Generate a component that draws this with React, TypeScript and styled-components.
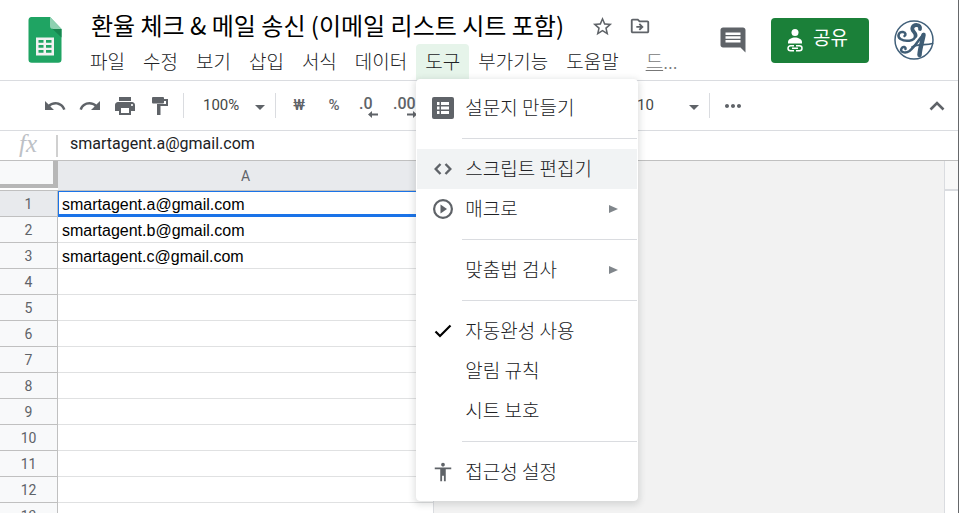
import React from 'react';
import styled, { createGlobalStyle, css } from 'styled-components';
import {
  MdUndo,
  MdRedo,
  MdPrint,
  MdComment,
  MdStarBorder,
  MdOutlineDriveFileMove,
  MdAccessibility,
  MdMoreHoriz,
} from 'react-icons/md';

const Global = createGlobalStyle`
  *, *::before, *::after { box-sizing: border-box; }
  html, body { margin: 0; height: 100%; }
  body { background: #fff; overflow: hidden; }
  button, input, select { font: inherit; color: inherit; margin: 0; }
`;

const korean = `'Noto Sans CJK KR', sans-serif`;
const roboto = `Roboto, 'Noto Sans CJK KR', sans-serif`;

const Page = styled.div`
  display: flex;
  flex-direction: column;
  height: 100vh;
  border-right: 1px solid #66686b;
  font-family: ${korean};
  color: #202124;
`;

const Header = styled.header`
  display: flex;
  flex: none;
  height: 81px;
  border-bottom: 1px solid #dadce0;
`;

const LogoLink = styled.a`
  flex: none;
  padding: 17px 19px 0 28px;
  svg { display: block; }
`;

const HeaderMain = styled.div`
  flex: 1;
  min-width: 0;
`;

const TitleRow = styled.div`
  display: flex;
  align-items: center;
  height: 44px;
  padding: 8px 0 0 10px;
`;

const Title = styled.h1`
  margin: 0 26px 0 0;
  padding-bottom: 2px;
  font-size: 24px;
  line-height: 36px;
  font-weight: 400;
  color: #000;
  white-space: nowrap;
`;

const IconButton = styled.button<{ $w?: number }>`
  display: flex;
  flex: none;
  align-items: center;
  justify-content: center;
  width: ${(p) => p.$w ?? 24}px;
  height: 32px;
  padding: 0;
  border: 0;
  background: none;
  color: #5f6368;
  svg { display: block; flex: none; }
`;

const TitleActions = styled.div`
  display: flex;
  gap: 14px;
`;

const MenuBar = styled.nav`
  display: flex;
  height: 36px;
`;

const MenuSlot = styled.div`
  position: relative;
`;

const MenuButton = styled.button<{ $active?: boolean }>`
  height: 36px;
  padding: 0 9px 2px;
  border: 0;
  border-radius: 4px 4px 0 0;
  background: ${(p) => (p.$active ? '#e6f4ea' : 'none')};
  font-size: 19px;
  font-weight: 300;
  line-height: 34px;
  white-space: nowrap;
`;

const DriveNote = styled.a`
  margin-left: 18px;
  font-size: 19px;
  font-weight: 300;
  line-height: 34px;
  color: #777;
  text-decoration: none;
  span { text-decoration: underline; }
`;

const HeaderSide = styled.div`
  display: flex;
  flex: none;
  align-items: center;
  height: 80px;
  padding-right: 24px;
`;

const ShareButton = styled.button`
  display: flex;
  align-items: center;
  gap: 10px;
  height: 45px;
  margin: 0 25px 0 23px;
  padding: 0 21px 0 16px;
  border: 0;
  border-radius: 4px;
  background: #1b8039;
  color: #fff;
  font-size: 19px;
  line-height: 40px;
  svg { display: block; }
  span { padding-bottom: 6px; }
`;

const Avatar = styled.button`
  padding: 0;
  border: 0;
  background: none;
  border-radius: 50%;
  svg { display: block; }
`;

const Menu = styled.div`
  position: absolute;
  top: 35px;
  left: 0;
  z-index: 10;
  width: 222px;
  padding: 8px 0;
  border: 1px solid #fff;
  border-radius: 4px;
  background: #fff;
  box-shadow: 0 2px 6px 2px rgba(60, 64, 67, 0.15);
`;

const MenuItem = styled.button<{ $hover?: boolean }>`
  display: grid;
  grid-template-columns: 48px 1fr 28px;
  align-items: center;
  width: 100%;
  height: 40px;
  padding: 0;
  border: 0;
  background: ${(p) => (p.$hover ? '#f1f3f4' : 'none')};
  font-size: 19px;
  font-weight: 300;
  line-height: 36px;
  text-align: left;
  white-space: nowrap;
`;

const ItemIcon = styled.span<{ $dark?: boolean }>`
  display: flex;
  justify-content: center;
  width: 52px;
  color: ${(p) => (p.$dark ? '#000' : '#5f6368')};
`;

const ItemLabel = styled.span`
  padding-bottom: 3px;
`;

const MenuRule = styled.hr`
  height: 1px;
  margin: 10px 0 10px 45px;
  border: 0;
  background: #dadce0;
`;

const Toolbar = styled.div`
  display: flex;
  flex: none;
  align-items: center;
  height: 50px;
  padding: 0 9px 0 43px;
  border-bottom: 1px solid #dadce0;
  font-family: ${roboto};
  font-size: 15px;
  color: #444746;
`;

const ToolGroup = styled.div<{ $gap: number }>`
  display: flex;
  align-items: center;
  gap: ${(p) => p.$gap}px;
`;

const Divider = styled.span<{ $before: number; $after: number }>`
  flex: none;
  width: 1px;
  height: 25px;
  margin: 0 ${(p) => p.$after}px 0 ${(p) => p.$before}px;
  background: #dadce0;
`;

const SelectBox = styled.label<{ $w: number }>`
  display: grid;
  align-items: center;
  width: ${(p) => p.$w}px;
  select, svg { grid-area: 1 / 1; }
  select {
    appearance: none;
    width: 100%;
    height: 32px;
    padding: 0 0 2px;
    border: 0;
    background: none;
  }
  svg { justify-self: end; pointer-events: none; margin-top: 3px; }
`;

const TextTool = styled.button<{ $w: number }>`
  width: ${(p) => p.$w}px;
  height: 32px;
  padding: 0 0 2px;
  border: 0;
  background: none;
  font-weight: 500;
  color: #5f6368;
`;

const FontSizeGroup = styled.div`
  display: flex;
  align-items: center;
  margin-left: 220px;
`;

const Spacer = styled.span`
  flex: 1;
`;

const FormulaBar = styled.div`
  display: flex;
  flex: none;
  align-items: center;
  height: 30px;
  border-bottom: 1px solid #c0c0c0;
`;

const FxLabel = styled.label`
  width: 56px;
  padding-bottom: 4px;
  font-family: 'Liberation Serif', serif;
  font-style: italic;
  font-size: 25px;
  line-height: 24px;
  text-align: center;
  color: #bdc1c6;
`;

const FormulaInput = styled.input`
  flex: 1;
  height: 22px;
  padding: 0 0 4px 12px;
  border: 0;
  border-left: 2px solid #d0d0d0;
  outline: 0;
  background: none;
  font-family: ${roboto};
  font-size: 16px;
`;

const Workspace = styled.main`
  display: flex;
  flex: 1;
  min-height: 0;
`;

const SheetArea = styled.div`
  flex: 1;
  min-width: 0;
  overflow: hidden;
  background: #f2f2f2;
`;

const Sheet = styled.table`
  width: 434px;
  table-layout: fixed;
  border-collapse: separate;
  border-spacing: 0;
  background: #fff;
  font-family: 'Liberation Sans', Arial, sans-serif;
  font-size: 16px;
`;

const Corner = styled.td`
  width: 58px;
  height: 30px;
  padding: 0 0 2px;
  border-bottom: 1px solid #c0c0c0;
`;

const CornerButton = styled.button`
  display: block;
  width: 58px;
  height: 27px;
  padding: 0;
  border: 0 solid #b7b7b7;
  border-width: 0 5px 4px 0;
  background: #f8f9fa;
`;

const headText = css`
  padding: 0;
  font-family: Roboto, sans-serif;
  font-weight: 400;
  font-size: 14px;
  color: #5f6368;
  border-bottom: 1px solid #c0c0c0;
`;

const ColumnHead = styled.th`
  ${headText}
  background: #e8eaed;
  border-right: 1px solid #c0c0c0;
`;

const RowHead = styled.th<{ $active: boolean }>`
  ${headText}
  height: 26px;
  border-right: 1px solid #c0c0c0;
  background: ${(p) => (p.$active ? '#e8eaed' : '#f8f9fa')};
`;

const Cell = styled.td<{ $active: boolean }>`
  height: 26px;
  padding: 2px 4px 0;
  line-height: 20px;
  color: #000;
  border-right: 1px solid #dadce0;
  border-bottom: 1px solid ${(p) => (p.$active ? '#1a73e8' : '#e0e1e2')};
  ${(p) =>
    p.$active &&
    css`
      box-shadow: inset 1px 1px 0 #1a73e8, inset 0 -2px 0 #1a73e8;
    `}
`;

const ScrollGutter = styled.div`
  flex: none;
  width: 14px;
  border-left: 1px solid #dadce0;
  &::before {
    content: '';
    display: block;
    height: 30px;
    background: #f8f8f8;
    border-bottom: 2px solid #dadce0;
  }
`;

const SheetsLogo = () => (
  <svg width="34" height="46" viewBox="0 0 34 46" aria-hidden="true">
    <path d="M3.500 0H22L33.500 12V42.500a3.300 3.300 0 0 1-3.300 3.300H3.800A3.300 3.300 0 0 1 .5 42.500V3.300A3.300 3.300 0 0 1 3.500 0z" fill="#1fa463" />
    <path d="M22 0l11.500 12H25a3 3 0 0 1-3-3z" fill="#8ed1b1" />
    <path d="M24 11.500l9.500 9V12H25z" fill="#17864f" />
    <path
      d="M8 20.500h18v18H8zM10.500 23v2.800h5V23zm7.500 0v2.800h5.500V23zm-7.500 5v2.800h5V28zm7.500 0v2.800h5.500V28zm-7.500 5v2.800h5V33zm7.500 0v2.800h5.500V33z"
      fill="#f1f1f1"
      fillRule="evenodd"
    />
  </svg>
);

const PaintRoller = () => (
  <svg width="18" height="18" viewBox="0 0 18 18" fill="currentColor" aria-hidden="true">
    <path d="M2 0h10a1 1 0 0 1 1 1v1h4v7H9.500v9H6V7h9V4h-2v1.500a1 1 0 0 1-1 1H2a1 1 0 0 1-1-1V1a1 1 0 0 1 1-1z" />
  </svg>
);

const Caret = () => (
  <svg width="10" height="5" viewBox="0 0 10 5" fill="#5f6368" aria-hidden="true">
    <path d="M0 0h10L5 5z" />
  </svg>
);

const DecimalTool = styled.button<{ $w: number }>`
  display: flex;
  flex-direction: column;
  align-items: flex-end;
  width: ${(p) => p.$w}px;
  padding: 3px 0 0;
  border: 0;
  background: none;
  font-size: 16px;
  font-weight: 500;
  line-height: 15px;
  color: #5f6368;
  span { align-self: flex-start; }
  svg { display: block; }
`;

const DecimalArrow = ({ right }: { right?: boolean }) => (
  <svg width="10" height="7" viewBox="0 0 10 7" fill="currentColor" aria-hidden="true">
    {right ? <path d="M0 2.500h6V0l4 3.500L6 7V4.500H0z" /> : <path d="M10 2.500H4V0L0 3.500 4 7V4.500h6z" />}
  </svg>
);

const FormIcon = () => (
  <svg width="22" height="22" viewBox="0 0 22 22" aria-hidden="true">
    <rect width="22" height="22" rx="2" fill="#5f6368" />
    <path d="M5 5h2.500v3H5zM9 5h8v3H9zM5 9.500h2.500v3H5zM9 9.500h8v3H9zM5 14h2.500v3H5zM9 14h8v3H9z" fill="#fff" />
  </svg>
);

const CodeIcon = () => (
  <svg width="18" height="12" viewBox="0 0 18 12" fill="none" stroke="currentColor" strokeWidth="2.400" aria-hidden="true">
    <path d="M6.500 1L1.700 6l4.800 5M11.500 1l4.800 5-4.800 5" />
  </svg>
);

const PlayIcon = () => (
  <svg width="20" height="20" viewBox="0 0 20 20" aria-hidden="true">
    <circle cx="10" cy="10" r="8.900" fill="none" stroke="currentColor" strokeWidth="2.200" />
    <path d="M7.500 5.500L14 10l-6.500 4.500z" fill="currentColor" />
  </svg>
);

const CheckIcon = () => (
  <svg width="18" height="14" viewBox="0 0 18 14" fill="none" stroke="currentColor" strokeWidth="2.200" aria-hidden="true">
    <path d="M1.500 7.500L6 12 16.500 1.500" />
  </svg>
);

const ChevronUp = () => (
  <svg width="16" height="10" viewBox="0 0 16 10" fill="none" stroke="currentColor" strokeWidth="2.600" aria-hidden="true">
    <path d="M1.500 8.500L8 2l6.500 6.500" />
  </svg>
);

const Submenu = () => (
  <svg width="9" height="8" viewBox="0 0 9 8" fill="#80868b" aria-hidden="true">
    <path d="M0 0l9 4-9 4z" />
  </svg>
);

const ShareIcon = () => (
  <svg width="16" height="23" viewBox="0 0 16 23" aria-hidden="true">
    <circle cx="8" cy="3.500" r="3.500" fill="#fff" />
    <path d="M1 14.500V13c0-3 4-4.500 7-4.500s7 1.500 7 4.500v1.500z" fill="#fff" />
    <g fill="none" stroke="#fff" strokeWidth="1.500">
      <path d="M7 16.700H3.500a2.500 2.500 0 0 0 0 5H7M9 16.700h3.500a2.500 2.500 0 0 1 0 5H9M5 19.200h6" />
    </g>
  </svg>
);

const Monogram = () => (
  <svg width="40" height="40" viewBox="0 0 40 40" aria-hidden="true">
    <circle cx="20" cy="20" r="19" fill="#fff" stroke="#41607a" strokeWidth="1.500" />
    <g fill="none" stroke="#3f5d75" strokeLinecap="round" strokeLinejoin="round">
      <path d="M26 9C27 4 20 4 18.500 7.500C17 11 22.500 12.500 21.500 16" strokeWidth="3.800" />
      <path d="M21.500 16C20.500 21.500 11 22 6.500 19C2.500 16 5 11.500 9 12C12 12.500 12 15 10.500 16" strokeWidth="2.500" />
      <path d="M30 14C25 19 21 27 15.500 31C11 34 5.500 32 7.500 28.500C9 26 12 27 11.500 29" strokeWidth="2.500" />
      <path d="M29.500 15C28.500 21 26 28 25.500 35" strokeWidth="4.500" />
      <path d="M18 27C24 23.500 32 25.500 38.500 23.500" strokeWidth="1.800" />
    </g>
  </svg>
);

const menus = ['파일', '수정', '보기', '삽입', '서식', '데이터', '도구', '부가기능', '도움말'];

type Entry = { label: string; icon?: React.ReactNode; dark?: boolean; hover?: boolean; sub?: boolean };

const toolSections: Entry[][] = [
  [{ label: '설문지 만들기', icon: <FormIcon /> }],
  [
    { label: '스크립트 편집기', icon: <CodeIcon />, hover: true },
    { label: '매크로', icon: <PlayIcon />, sub: true },
  ],
  [{ label: '맞춤법 검사', sub: true }],
  [
    { label: '자동완성 사용', icon: <CheckIcon />, dark: true },
    { label: '알림 규칙' },
    { label: '시트 보호' },
  ],
  [{ label: '접근성 설정', icon: <MdAccessibility size={22} /> }],
];

const values = ['smartagent.a@gmail.com', 'smartagent.b@gmail.com', 'smartagent.c@gmail.com'];
const rows = Array.from({ length: 13 }, (_, i) => values[i] ?? '');

const ToolsMenu = () => (
  <Menu role="menu" aria-label="도구">
    {toolSections.map((section, i) => (
      <React.Fragment key={i}>
        {i > 0 && <MenuRule />}
        {section.map((e) => (
          <MenuItem key={e.label} role="menuitem" $hover={e.hover}>
            <ItemIcon $dark={e.dark}>{e.icon}</ItemIcon>
            <ItemLabel>{e.label}</ItemLabel>
            {e.sub && <Submenu />}
          </MenuItem>
        ))}
      </React.Fragment>
    ))}
  </Menu>
);

export default function App() {
  return (
    <Page>
      <Global />
      <Header>
        <LogoLink href="#" aria-label="스프레드시트 홈">
          <SheetsLogo />
        </LogoLink>
        <HeaderMain>
          <TitleRow>
            <Title>환율 체크 &amp; 메일 송신 (이메일 리스트 시트 포함)</Title>
            <TitleActions>
              <IconButton aria-label="별표"><MdStarBorder size={23} /></IconButton>
              <IconButton aria-label="이동"><MdOutlineDriveFileMove size={22} /></IconButton>
            </TitleActions>
          </TitleRow>
          <MenuBar>
            {menus.map((m) => (
              <MenuSlot key={m}>
                <MenuButton $active={m === '도구'}>{m}</MenuButton>
                {m === '도구' && <ToolsMenu />}
              </MenuSlot>
            ))}
            <DriveNote href="#"><span>드</span>...</DriveNote>
          </MenuBar>
        </HeaderMain>
        <HeaderSide>
          <IconButton $w={30} aria-label="댓글"><MdComment size={30} /></IconButton>
          <ShareButton>
            <ShareIcon />
            <span>공유</span>
          </ShareButton>
          <Avatar aria-label="계정"><Monogram /></Avatar>
        </HeaderSide>
      </Header>

      <Toolbar>
        <ToolGroup $gap={11}>
          <IconButton aria-label="실행취소"><MdUndo size={24} /></IconButton>
          <IconButton aria-label="재실행"><MdRedo size={24} /></IconButton>
          <IconButton aria-label="인쇄"><MdPrint size={24} /></IconButton>
          <IconButton aria-label="서식 복사"><PaintRoller /></IconButton>
        </ToolGroup>
        <Divider $before={11} $after={19} />
        <SelectBox $w={62}>
          <select aria-label="확대/축소" defaultValue="100%">
            <option>100%</option>
          </select>
          <Caret />
        </SelectBox>
        <Divider $before={10} $after={13} />
        <ToolGroup $gap={15}>
          <TextTool $w={20} aria-label="통화 형식">₩</TextTool>
          <TextTool $w={20} aria-label="퍼센트 형식">%</TextTool>
          <DecimalTool $w={19} aria-label="소수점 이하 자릿수 감소"><span>.0</span><DecimalArrow /></DecimalTool>
          <DecimalTool $w={24} aria-label="소수점 이하 자릿수 증가"><span>.00</span><DecimalArrow right /></DecimalTool>
        </ToolGroup>
        <FontSizeGroup>
          <SelectBox $w={62}>
            <select aria-label="글꼴 크기" defaultValue="10">
              <option>10</option>
            </select>
            <Caret />
          </SelectBox>
          <Divider $before={10} $after={11} />
          <IconButton aria-label="더보기"><MdMoreHoriz size={24} /></IconButton>
        </FontSizeGroup>
        <Spacer />
        <IconButton aria-label="메뉴 숨기기"><ChevronUp /></IconButton>
      </Toolbar>

      <FormulaBar>
        <FxLabel htmlFor="formula">fx</FxLabel>
        <FormulaInput id="formula" defaultValue="smartagent.a@gmail.com" />
      </FormulaBar>

      <Workspace>
        <SheetArea>
          <Sheet>
            <thead>
              <tr>
                <Corner><CornerButton aria-label="모두 선택" /></Corner>
                <ColumnHead scope="col">A</ColumnHead>
              </tr>
            </thead>
            <tbody>
              {rows.map((v, i) => (
                <tr key={i}>
                  <RowHead scope="row" $active={i === 0}>{i + 1}</RowHead>
                  <Cell $active={i === 0}>{v}</Cell>
                </tr>
              ))}
            </tbody>
          </Sheet>
        </SheetArea>
        <ScrollGutter />
      </Workspace>
    </Page>
  );
}
